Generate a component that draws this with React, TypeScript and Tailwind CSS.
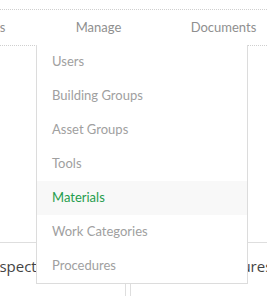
import React from "react";

const items = [
  "Users",
  "Building Groups",
  "Asset Groups",
  "Tools",
  "Materials",
  "Work Categories",
  "Procedures",
];

export default function App() {
  return (
    <div
      className="relative w-[267px] h-[296px] overflow-hidden bg-white"
      style={{ fontFamily: 'Lato, "Open Sans", "Liberation Sans", sans-serif' }}
    >
      <div className="h-[9px]" />
      {/* nav */}
      <div className="border-t border-b border-dotted border-[#cfcfcf] h-[37px]">
        <div className="flex ml-[-89px] h-[36px] items-center text-[13px] text-[#8f8f8f]">
          <div className="w-[125px] text-center shrink-0">Operations</div>
          <div className="w-[125px] text-center shrink-0">Manage</div>
          <div className="w-[125px] text-center shrink-0">Documents</div>
        </div>
      </div>

      {/* content cards */}
      <div
        className="mt-[196px] flex gap-[4px] ml-[-60px]"
        style={{ fontFamily: '"Open Sans", "Liberation Sans", sans-serif' }}
      >
        <div className="w-[186px] h-[60px] border-t border-r border-[#dedede] shrink-0 text-[15px] text-[#444] pt-[12px] pl-[46px]">
          Inspections
        </div>
        <div className="w-[200px] h-[60px] border-t border-l border-[#dedede] shrink-0 text-[15px] text-[#444] pt-[12px] pl-[73px]">
          Measures
        </div>
      </div>

      {/* dropdown */}
      <div className="absolute left-[36px] top-[45px] w-[212px] bg-white border-l border-r border-b border-[#dcdcdc]">
        {items.map((it) => (
          <div
            key={it}
            className={
              it === "Materials"
                ? "h-[34px] flex items-center pl-[15px] text-[13px] text-[#1f9d4c] bg-[#f8f8f8]"
                : "h-[34px] flex items-center pl-[15px] text-[13px] text-[#a0a0a0]"
            }
          >
            {it}
          </div>
        ))}
      </div>
    </div>
  );
}
